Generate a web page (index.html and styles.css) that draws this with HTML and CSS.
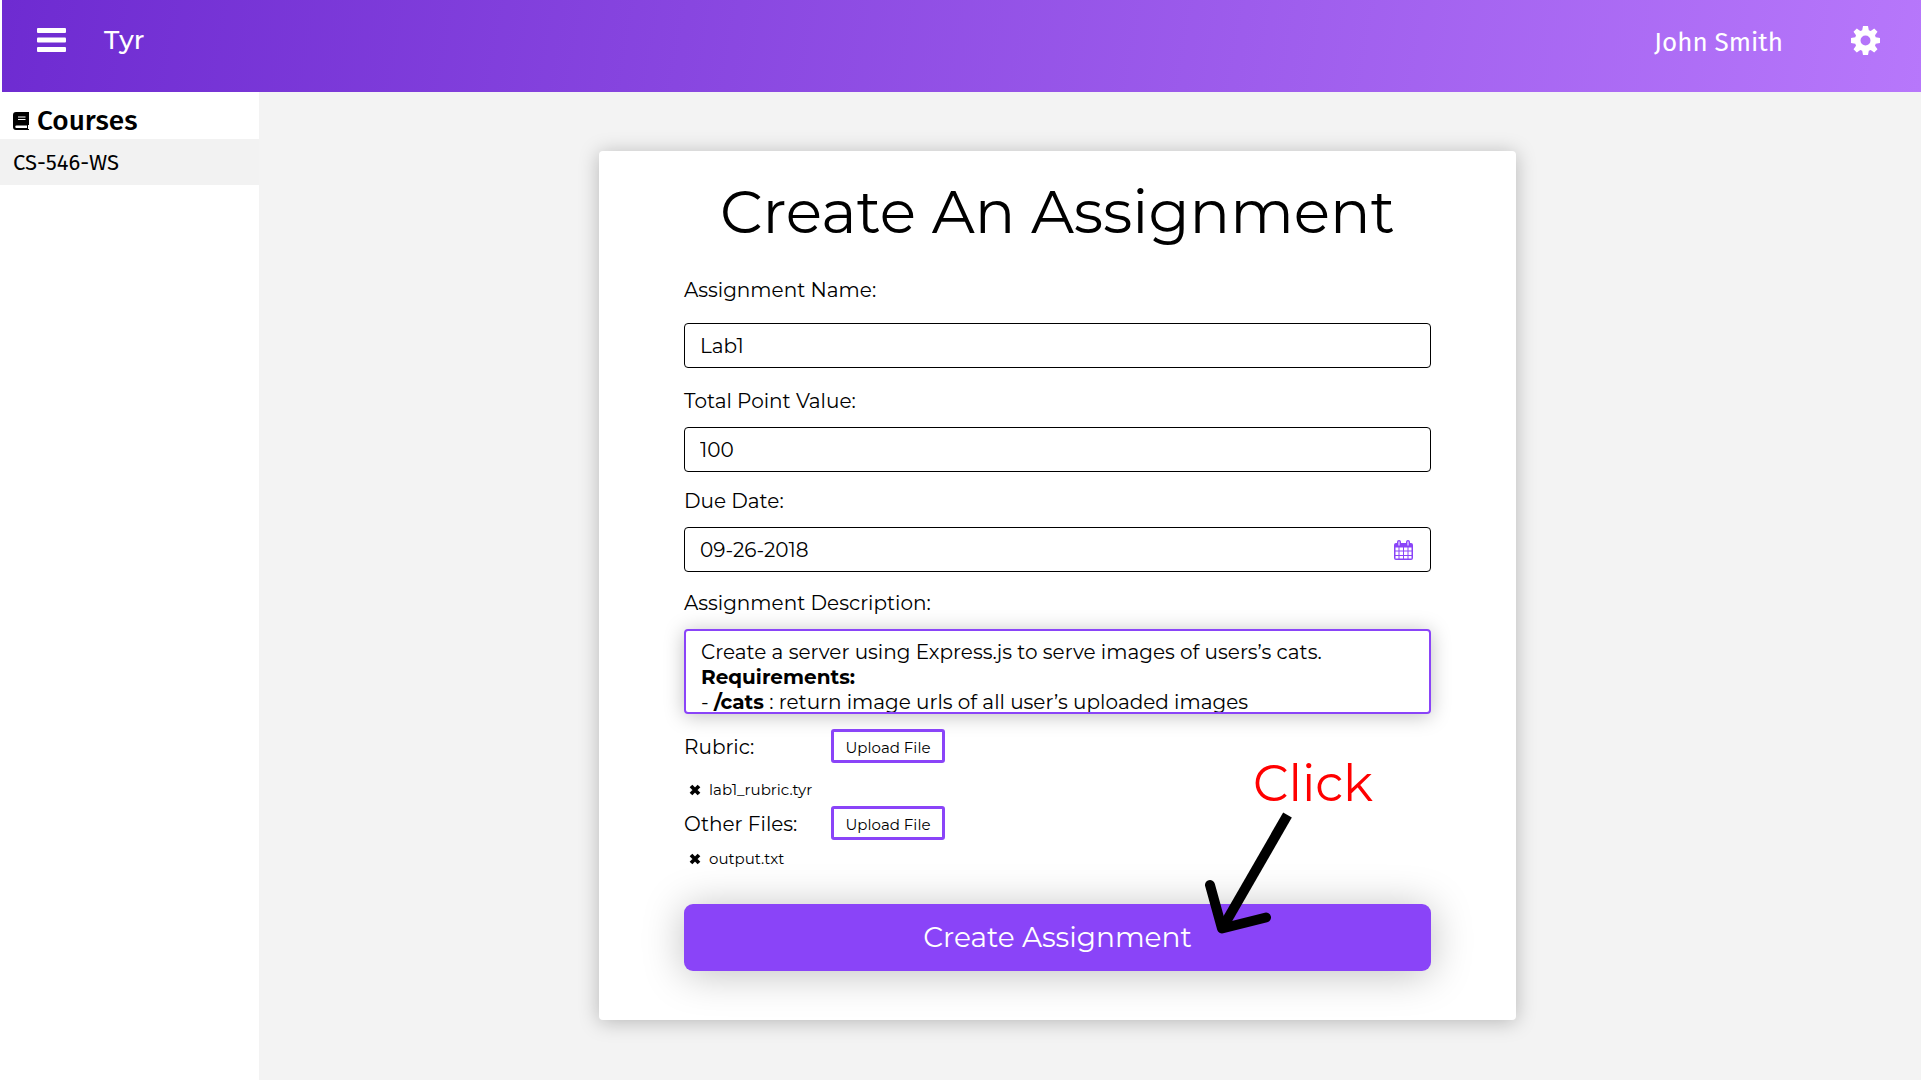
FILE: index.html
```html
<!DOCTYPE html>
<html lang="en">
<head>
<meta charset="utf-8">
<title>Tyr - Create An Assignment</title>
<meta name="viewport" content="width=device-width, initial-scale=1">
<link rel="stylesheet" href="styles.css">
</head>
<body>
<header class="topbar">
  <button class="icon-button" type="button" aria-label="Menu">
    <svg width="29" height="29" viewBox="0 0 29 29" fill="currentColor" aria-hidden="true"><rect y="2" width="29" height="5" rx="1"/><rect y="11.500" width="29" height="5" rx="1"/><rect y="21" width="29" height="5" rx="1"/></svg>
  </button>
  <a class="brand" href="#">Tyr</a>
  <a class="user" href="#">John Smith</a>
  <button class="icon-button" type="button" aria-label="Settings">
    <svg width="29" height="29" viewBox="-14.500 -14.500 29 29" fill="currentColor" aria-hidden="true">
      <path fill-rule="evenodd" d="M-2.500-14.500H2.500L3.300-10.200L5.200-9.500L8.700-12L12-8.700L9.500-5.200L10.200-3.300L14.500-2.500V2.500L10.200 3.300L9.500 5.200L12 8.700L8.700 12L5.200 9.500L3.300 10.200L2.500 14.500H-2.500L-3.300 10.200L-5.200 9.500L-8.700 12L-12 8.700L-9.500 5.200L-10.200 3.300L-14.500 2.500V-2.500L-10.200-3.300L-9.500-5.200L-12-8.700L-8.700-12L-5.200-9.500L-3.300-10.200ZM0-5A5 5 0 1 0 0 5A5 5 0 1 0 0-5Z"/>
    </svg>
  </button>
</header>
<div class="layout">
  <nav class="sidebar" aria-label="Courses">
    <h2 class="sidebar-title">
      <svg width="16" height="18" viewBox="0 0 16 18" aria-hidden="true"><path d="M3 0H16V13H15V17H16V18H3A3 3 0 0 1 0 15V3A3 3 0 0 1 3 0Z"/><path d="M3.500 13.500H14V16H3.500A1.250 1.250 0 0 1 3.500 13.500ZM5 4.500H12.500V5.500H5ZM5 7H12.500V8H5Z" fill="#fff"/></svg>
      Courses
    </h2>
    <a class="course" href="#">CS-546-WS</a>
  </nav>
  <main class="content">
    <form class="card">
      <h1 class="title">Create An Assignment</h1>
      <div class="field field-first">
        <label for="name">Assignment Name:</label>
        <input class="box" id="name" type="text" value="Lab1">
      </div>
      <div class="field">
        <label for="points">Total Point Value:</label>
        <input class="box" id="points" type="text" value="100">
      </div>
      <div class="field field-date">
        <label for="due">Due Date:</label>
        <div class="box date-box">
          <input class="date-input" id="due" type="text" value="09-26-2018">
          <button class="date-button" type="button" aria-label="Pick a date">
            <svg width="19" height="20" viewBox="0 0 19 20" aria-hidden="true"><path fill="#8a44f8" d="M2 3H17A2 2 0 0 1 19 5V18A2 2 0 0 1 17 20H2A2 2 0 0 1 0 18V5A2 2 0 0 1 2 3Z"/><rect x="3" width="4" height="6" rx="2" fill="#8a44f8"/><rect x="12" width="4" height="6" rx="2" fill="#8a44f8"/><path fill="#fff" d="M4.500 1.500h1v4h-1zM13.500 1.500h1v4h-1zM1.500 7.500h3v3h-3zM5.500 7.500h3.500v3h-3.500zM10 7.500h3.500v3h-3.500zM14.500 7.500h3v3h-3zM1.500 11.500h3v3.500h-3zM5.500 11.500h3.500v3.500h-3.500zM10 11.500h3.500v3.500h-3.500zM14.500 11.500h3v3.500h-3zM1.500 16h3v2.500h-3zM5.500 16h3.500v2.500h-3.500zM10 16h3.500v2.500h-3.500zM14.500 16h3v2.500h-3z"/></svg>
          </button>
        </div>
      </div>
      <div class="field">
        <span class="label" id="description-label">Assignment Description:</span>
        <div class="editor" role="textbox" aria-multiline="true" aria-labelledby="description-label" contenteditable="true" spellcheck="false">
          <div>Create a server using Express.js to serve images of users’s cats.</div>
          <div><b>Requirements:</b></div>
          <div>- <b>/cats</b> : return image urls of all user’s uploaded images</div>
        </div>
      </div>
      <section class="uploads">
        <div class="upload-row"><span class="label" id="rubric">Rubric:</span><button class="upload" type="button" aria-describedby="rubric">Upload File</button></div>
        <div class="file file-spaced">
          <button class="remove" type="button" aria-label="Remove lab1_rubric.tyr"><svg width="12" height="12" viewBox="0 0 12 12" aria-hidden="true"><path d="M2 2L10 10M10 2L2 10" stroke="#000" stroke-width="3.800"/></svg></button>
          <span>lab1_rubric.tyr</span>
        </div>
        <div class="upload-row"><span class="label" id="others">Other Files:</span><button class="upload" type="button" aria-describedby="others">Upload File</button></div>
        <div class="file">
          <button class="remove" type="button" aria-label="Remove output.txt"><svg width="12" height="12" viewBox="0 0 12 12" aria-hidden="true"><path d="M2 2L10 10M10 2L2 10" stroke="#000" stroke-width="3.800"/></svg></button>
          <span>output.txt</span>
        </div>
      </section>
      <div class="submit-area">
        <button class="submit" type="submit">Create Assignment</button>
        <div class="hint">
          <span class="hint-text">Click</span>
          <svg class="hint-arrow" width="66" height="120" viewBox="0 2 66 120" fill="none" stroke="#000" stroke-width="10" aria-hidden="true"><path d="M82.500 3L18 115"/><path d="M5 73L17 116.500L61 105.500" stroke-linecap="round" stroke-linejoin="round"/></svg>
        </div>
      </div>
    </form>
  </main>
</div>
</body>
</html>
```
FILE: styles.css
```css
* {
  box-sizing: border-box;
}

body {
  margin: 0;
  min-height: 100vh;
  display: flex;
  flex-direction: column;
  background: #f3f3f3;
  color: #000;
  font-family: Montserrat, Inter, sans-serif;
  font-size: 20px;
  line-height: 24px;
}

button,
input {
  font: inherit;
  color: inherit;
}

button {
  padding: 0;
  border: 0;
  background: none;
  cursor: pointer;
}

a {
  color: inherit;
  text-decoration: none;
}

svg {
  display: block;
}

/* Top bar */

.topbar {
  display: flex;
  align-items: center;
  height: 92px;
  padding: 0 41px 12px 35px;
  border-left: 2px solid #fff;
  background: linear-gradient(100deg, #6e2bd1, #b777fb);
  color: #fff;
}

.brand {
  margin-left: 38px;
  font-size: 26px;
  font-weight: 500;
}

.user {
  margin-left: auto;
  margin-right: 68px;
  padding-top: 6px;
  font-family: "Fira Sans", "Noto Sans", sans-serif;
  font-size: 26px;
}

/* Sidebar */

.layout {
  display: flex;
  flex: 1;
}

.sidebar {
  width: 259px;
  flex: none;
  background: #fff;
  font-family: "Fira Sans", "Noto Sans", sans-serif;
}

.sidebar-title {
  display: flex;
  align-items: center;
  gap: 8px;
  height: 47px;
  margin: 0;
  padding: 10px 13px 0;
  font-size: 28px;
  font-weight: 500;
}

.course {
  display: flex;
  align-items: center;
  height: 46px;
  padding: 2px 13px 0;
  background: #f2f2f2;
  font-size: 22px;
}

/* Assignment form */

.content {
  flex: 1;
  display: grid;
  grid-template-columns: 340fr 917fr 405fr;
  align-items: start;
  padding: 59px 0;
}

.card {
  grid-column: 2;
  padding: 31px 85px 49px;
  border-radius: 4px;
  background: #fff;
  box-shadow: 0 2px 20px rgba(0, 0, 0, 0.25);
}

.title {
  margin: 0 0 36px;
  font-size: 60px;
  font-weight: 400;
  line-height: 60px;
  text-align: center;
  white-space: nowrap;
}

.field {
  display: flex;
  flex-direction: column;
  gap: 14px;
  margin-bottom: 15px;
}

.field-first {
  gap: 21px;
  margin-bottom: 21px;
}

.field-date {
  padding-top: 2px;
  margin-bottom: 19px;
}

.box {
  width: 100%;
  height: 45px;
  padding: 0 15px;
  border: 1px solid #000;
  border-radius: 4px;
  background: #fff;
}

.date-box {
  display: flex;
  align-items: center;
  padding-right: 17px;
}

.date-input {
  flex: 1;
  padding: 0;
  border: 0;
  outline: 0;
}

.editor {
  height: 85px;
  padding: 9px 15px 0;
  overflow: hidden;
  border: 2px solid #8a44f8;
  border-radius: 4px;
  line-height: 25px;
  box-shadow: 0 2px 20px rgba(0, 0, 0, 0.25);
}

.upload-row {
  display: flex;
  align-items: center;
}

.upload-row .label {
  width: 147px;
  padding-top: 2px;
}

.upload {
  width: 114px;
  height: 34px;
  padding-top: 3px;
  border: 3px solid #8a44f8;
  border-radius: 3px;
  font-size: 15px;
}

.file {
  display: flex;
  align-items: center;
  gap: 8px;
  height: 38px;
  padding-left: 5px;
  font-size: 15px;
}

.file-spaced {
  height: 43px;
  padding-top: 10px;
}

.submit-area {
  position: relative;
  margin-top: 26px;
}

.submit {
  width: 100%;
  height: 67px;
  padding-bottom: 2px;
  border-radius: 9px;
  background: #8a44f8;
  color: #fff;
  font-size: 28px;
  font-weight: 400;
  box-shadow: 0 3px 40px rgba(0, 0, 0, 0.25);
}

/* Click hint laid over the submit button */

.hint {
  position: absolute;
  right: 58px;
  bottom: 37px;
  pointer-events: none;
}

.hint-text {
  display: block;
  margin-left: 48px;
  color: #f00;
  font-size: 50px;
  font-weight: 400;
  line-height: 60px;
}

.hint-arrow {
  overflow: visible;
}
```
